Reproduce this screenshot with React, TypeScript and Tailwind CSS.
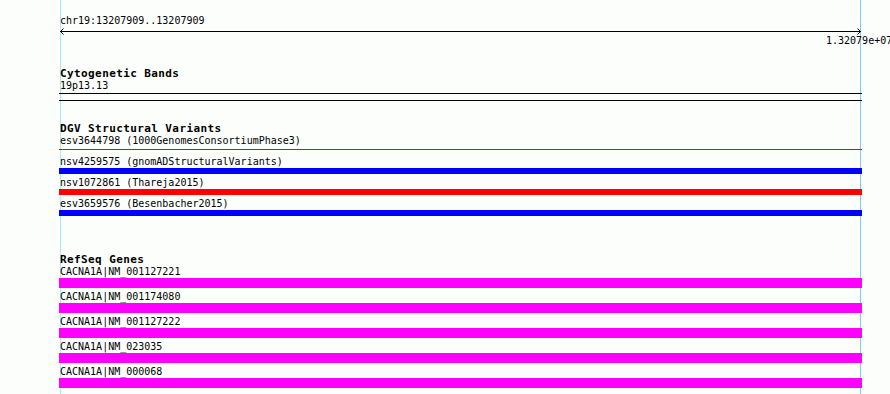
const mono = { fontFamily: '"DejaVu Sans Mono", "Liberation Mono", monospace' };

const dgv = [
  { label: "nsv4259575 (gnomADStructuralVariants)", color: "bg-[#0000ff]" },
  { label: "nsv1072861 (Thareja2015)", color: "bg-[#ff0000]" },
  { label: "esv3659576 (Besenbacher2015)", color: "bg-[#0000ff]" },
];

const genes = [
  "CACNA1A|NM_001127221",
  "CACNA1A|NM_001174080",
  "CACNA1A|NM_001127222",
  "CACNA1A|NM_023035",
  "CACNA1A|NM_000068",
];

function Title({ children, className = "" }: { children: string; className?: string }) {
  return (
    <div className={`h-[12px] text-[11px] leading-[12px] font-bold tracking-[0.4px] whitespace-nowrap ${className}`}>
      {children}
    </div>
  );
}

function Label({ children, className = "" }: { children: string; className?: string }) {
  return <div className={`h-[12px] text-[10px] leading-[12px] whitespace-nowrap ${className}`}>{children}</div>;
}

export default function App() {
  return (
    <div className="relative w-[890px] h-[394px] overflow-hidden bg-[#fcfefc] text-black" style={mono}>
      {/* region boundaries */}
      <div className="absolute left-[60px] top-0 h-full w-px bg-[#a8eef0]" />
      <div className="absolute left-[860px] top-0 h-full w-px bg-[#80ccec]" />

      <div className="relative flex flex-col pl-[59px]">
        <div className="h-[15px]" />
        <Label className="pl-px">chr19:13207909..13207909</Label>
        <svg width="803" height="8" className="block">
          <line x1="1" y1="4.5" x2="802" y2="4.5" stroke="#000" strokeWidth="1" />
          <polyline points="4.5,1.5 1.5,4.5 4.5,7.5" fill="none" stroke="#000" strokeWidth="1" />
          <polyline points="798.5,1.5 801.5,4.5 798.5,7.5" fill="none" stroke="#000" strokeWidth="1" />
        </svg>
        <Label className="ml-[767px]">1.32079e+07</Label>

        {/* cytogenetic bands */}
        <Title className="mt-[21px] pl-px">Cytogenetic Bands</Title>
        <Label className="pl-px">19p13.13</Label>
        <div className="mt-px h-px w-[803px] bg-black" />
        <div className="mt-[6px] h-px w-[803px] bg-black" />

        {/* DGV */}
        <Title className="mt-[22px] h-[11px] pl-px">DGV Structural Variants</Title>
        <div className="h-[21px]">
          <Label className="pl-px">esv3644798 (1000GenomesConsortiumPhase3)</Label>
          <div className="mt-[2px] h-px w-[803px] bg-[#ff0000]" />
        </div>
        {dgv.map((d) => (
          <div key={d.label} className="h-[21px]">
            <Label className="pl-px">{d.label}</Label>
            <div className={`h-[6px] w-[803px] ${d.color}`} />
          </div>
        ))}

        {/* RefSeq */}
        <Title className="mt-[35px] pl-px">RefSeq Genes</Title>
        {genes.map((g) => (
          <div key={g} className="h-[25px]">
            <Label className="pl-px">{g}</Label>
            <div className="h-[10px] w-[803px] bg-[#ff00ff]" />
          </div>
        ))}
      </div>
    </div>
  );
}
